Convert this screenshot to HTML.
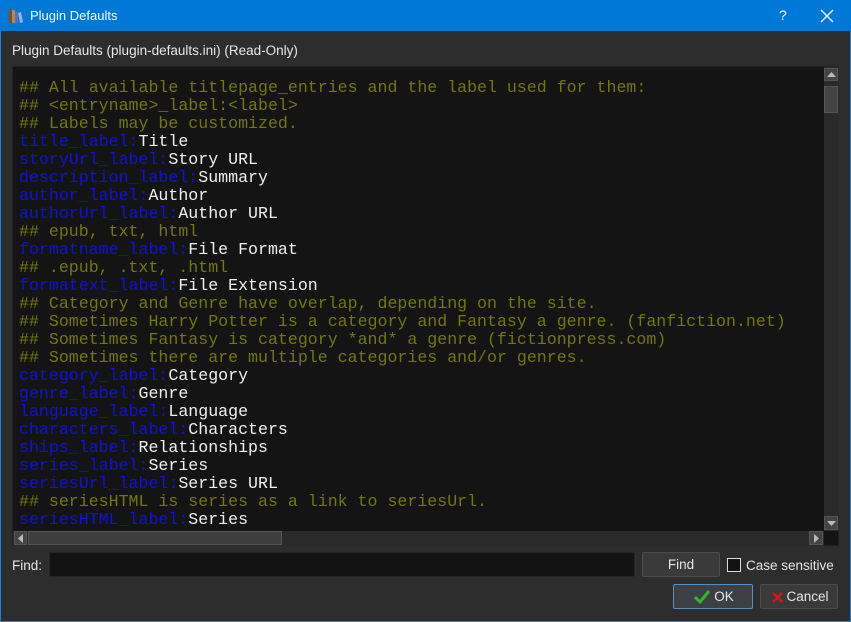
<!DOCTYPE html>
<html><head><meta charset="utf-8"><style>
*{margin:0;padding:0;box-sizing:border-box}
body{width:851px;height:622px;background:#2d2d2d;position:relative;overflow:hidden;font-family:"Liberation Sans",sans-serif;color:#e6e6e6}
.win{position:absolute;inset:0;border:1px solid #1a80d8;border-top:none}
.title{position:absolute;left:0;top:0;width:851px;height:31px;background:#0078d7;color:#fff;font-size:13px}
.title .t{position:absolute;left:30px;top:8px}
.title .q{position:absolute;left:779px;top:7px;font-size:14px}
.lbl{position:absolute;left:12px;top:43px;font-size:13.5px;color:#e8e8e8}
.ed{position:absolute;left:12px;top:66px;width:827px;height:480px;background:#141414;border:1px solid #222}
.code{position:absolute;left:6px;top:12px;font-family:"Liberation Mono",monospace;font-size:16.6px;line-height:18px;white-space:pre;color:#f0f0f0}
.c{color:#72780c}.k{color:#1010e0}
.vs{position:absolute;left:811px;top:0;width:15px;height:464px;background:#2a2a2a}
.hs{position:absolute;left:0;top:464px;width:811px;height:15px;background:#2a2a2a}
.btnsb{position:absolute;background:#444;border:1px solid #555}
.in{position:absolute;left:49px;top:552px;width:586px;height:25px;background:#131313;border:1px solid #262626;border-radius:2px}
.btn{position:absolute;height:25px;background:#3a3a3a;border:1px solid #4c4c4c;border-radius:2px;font-size:13.5px;color:#e6e6e6;text-align:center;line-height:23px}
</style></head><body>
<div class="win"></div>
<div class="title">
<svg style="position:absolute;left:8px;top:7px" width="16" height="17"><rect x="1" y="2" width="3" height="14" fill="#8a4a22"/><rect x="4" y="3" width="3" height="13" fill="#b08a50"/><rect x="7" y="5" width="3" height="11" fill="#5a6ec8"/><polygon points="10,6 13,5 15,15 12,16" fill="#9ab0e0"/></svg>
<span class="t">Plugin Defaults</span><span class="q">?</span>
<svg width="14" height="14" style="position:absolute;left:820px;top:9px"><path d="M1 1L13 13M13 1L1 13" stroke="#fff" stroke-width="1.3"/></svg>
</div>
<div class="lbl">Plugin Defaults (plugin-defaults.ini) (Read-Only)</div>
<div class="ed">
<div class="code"><span class="c">## All available titlepage_entries and the label used for them:
## &lt;entryname&gt;_label:&lt;label&gt;
## Labels may be customized.</span>
<span class="k">title_label:</span>Title
<span class="k">storyUrl_label:</span>Story URL
<span class="k">description_label:</span>Summary
<span class="k">author_label:</span>Author
<span class="k">authorUrl_label:</span>Author URL
<span class="c">## epub, txt, html</span>
<span class="k">formatname_label:</span>File Format
<span class="c">## .epub, .txt, .html</span>
<span class="k">formatext_label:</span>File Extension
<span class="c">## Category and Genre have overlap, depending on the site.
## Sometimes Harry Potter is a category and Fantasy a genre. (fanfiction.net)
## Sometimes Fantasy is category *and* a genre (fictionpress.com)
## Sometimes there are multiple categories and/or genres.</span>
<span class="k">category_label:</span>Category
<span class="k">genre_label:</span>Genre
<span class="k">language_label:</span>Language
<span class="k">characters_label:</span>Characters
<span class="k">ships_label:</span>Relationships
<span class="k">series_label:</span>Series
<span class="k">seriesUrl_label:</span>Series URL
<span class="c">## seriesHTML is series as a link to seriesUrl.</span>
<span class="k">seriesHTML_label:</span>Series</div>
<div class="vs">
<div class="btnsb" style="left:0;top:1px;width:14px;height:13px"></div>
<svg style="position:absolute;left:3px;top:5px" width="9" height="5"><path d="M0 5L4.5 0L9 5Z" fill="#bbb"/></svg>
<div class="btnsb" style="left:0;top:19px;width:14px;height:27px"></div>
<div class="btnsb" style="left:0;top:449px;width:14px;height:14px"></div>
<svg style="position:absolute;left:3px;top:454px" width="9" height="5"><path d="M0 0L4.5 5L9 0Z" fill="#bbb"/></svg>
</div>
<div class="hs">
<div class="btnsb" style="left:1px;top:0;width:13px;height:14px"></div>
<svg style="position:absolute;left:5px;top:3px" width="5" height="9"><path d="M5 0L0 4.5L5 9Z" fill="#bbb"/></svg>
<div class="btnsb" style="left:15px;top:0;width:254px;height:14px;background:#3e3e3e"></div>
<div class="btnsb" style="left:796px;top:0;width:14px;height:14px"></div>
<svg style="position:absolute;left:801px;top:3px" width="5" height="9"><path d="M0 0L5 4.5L0 9Z" fill="#bbb"/></svg>
</div>
</div>
<div style="position:absolute;left:12px;top:558px;font-size:13.5px">Find:</div>
<div class="in"></div>
<div class="btn" style="left:642px;top:552px;width:78px">Find</div>
<div style="position:absolute;left:727px;top:558px;width:14px;height:14px;border:1px solid #ddd;background:#131313"></div>
<div style="position:absolute;left:746px;top:558px;font-size:13.5px">Case sensitive</div>
<div class="btn" style="left:673px;top:584px;width:80px;height:25px;border-color:#5a8fc0;background:#3c4044">
<svg style="position:absolute;left:20px;top:5px" width="16" height="14"><path d="M1 7L6 12L15 1" stroke="#2db82d" stroke-width="3" fill="none"/></svg><span style="padding-left:22px">OK</span></div>
<div class="btn" style="left:760px;top:584px;width:78px">
<svg style="position:absolute;left:11px;top:7px" width="11" height="11"><path d="M1 1L10 10M10 1L1 10" stroke="#d01818" stroke-width="2.6"/></svg><span style="padding-left:17px">Cancel</span></div>
</body></html>
